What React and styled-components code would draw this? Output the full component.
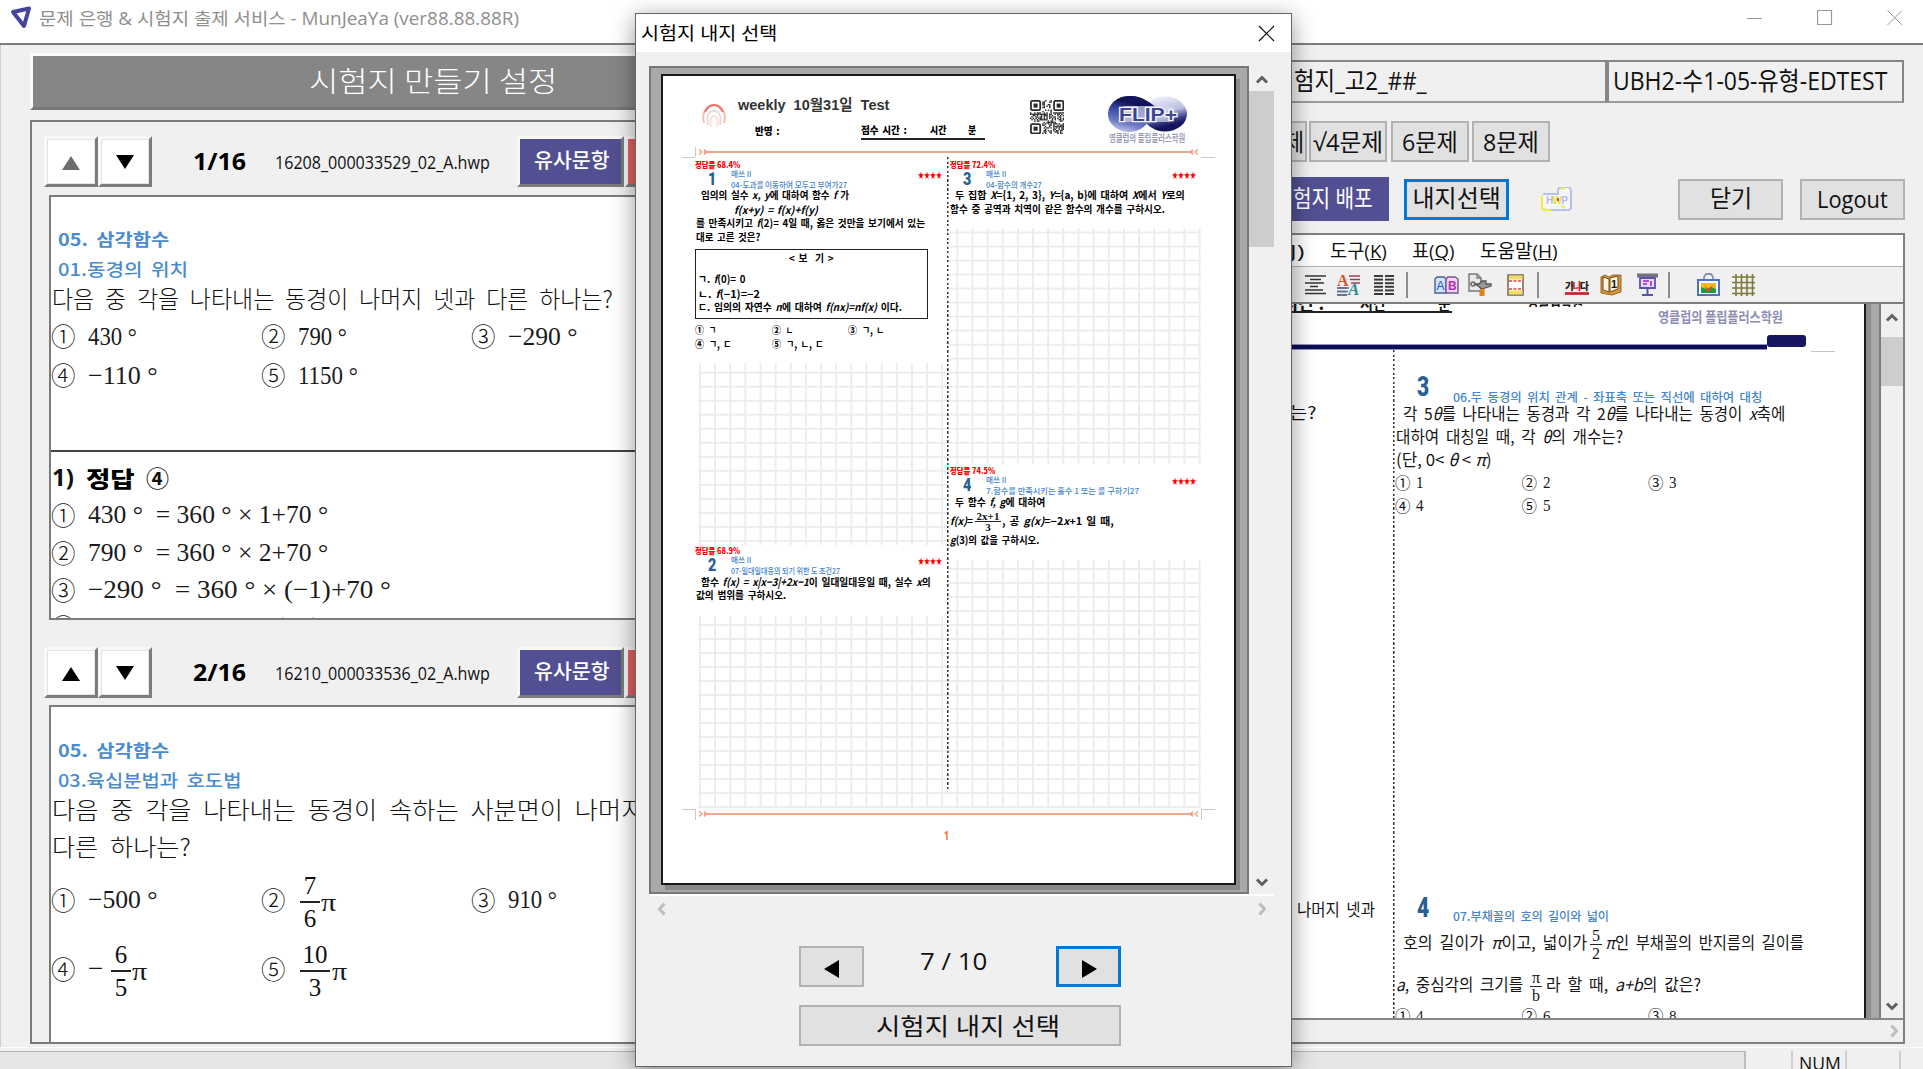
import React, { useLayoutEffect, useRef, useState } from "react";
import styled, { createGlobalStyle, css } from "styled-components";

const UI = `"Open Sans", "Noto Sans CJK KR", sans-serif`;
const KR = `"Noto Sans CJK KR", "Open Sans", sans-serif`;
const MATH = `"Liberation Serif", "Noto Sans CJK KR", serif`;
const NUMERAL = `"Roboto", "Open Sans", sans-serif`;

const Global = createGlobalStyle`
  * { box-sizing: border-box; }
  body { margin: 0; background: #f0f0f0; font-family: ${UI}; color: #111; overflow: hidden; }
`;

/* ---------- fitted text: a run set to an exact measure ---------- */
const Measure = styled.span`
  display: inline-block;
  flex: none;
  width: ${(p) => p.$w}px;
  margin-left: ${(p) => p.$ml || 0}px;
  margin-top: ${(p) => p.$mt || 0}px;
  font-family: ${(p) => p.$font || UI};
  font-size: ${(p) => p.$size || 18}px;
  font-weight: ${(p) => p.$weight || 400};
  color: ${(p) => p.$color || "inherit"};
  word-spacing: ${(p) => p.$ws || 0}em;
  line-height: 1;
  white-space: pre;
`;
const Run = styled.span`
  display: inline-block;
  transform-origin: 0 50%;
`;
function Fit({ w, ml, mt, size, weight, color, font, ws, children }) {
  const ref = useRef(null);
  const [k, setK] = useState(1);
  useLayoutEffect(() => {
    if (ref.current && ref.current.offsetWidth) setK(w / ref.current.offsetWidth);
  }, [w]);
  return (
    <Measure $w={w} $ml={ml} $mt={mt} $size={size} $weight={weight} $color={color} $font={font} $ws={ws}>
      <Run ref={ref} style={{ transform: `scaleX(${k})` }}>{children}</Run>
    </Measure>
  );
}

/* ---------- shared pieces ---------- */
const Row = styled.div`
  display: flex;
  align-items: ${(p) => p.$align || "center"};
  flex: none;
  height: ${(p) => p.$h}px;
  margin-top: ${(p) => p.$mt || 0}px;
  padding-left: ${(p) => p.$x || 0}px;
  width: ${(p) => (p.$w ? p.$w + "px" : "auto")};
`;
const Space = styled.div`
  flex: none;
  height: ${(p) => p.$h}px;
`;
const FracBox = styled.span`
  display: inline-flex;
  flex-direction: column;
  align-items: center;
  flex: none;
  width: ${(p) => p.$w}px;
  margin-left: ${(p) => p.$ml || 0}px;
  margin-top: ${(p) => p.$mt || 0}px;
  font: ${(p) => p.$weight || 400} ${(p) => p.$size}px/${(p) => p.$lh} ${MATH};
  white-space: nowrap;
`;
const Num = styled.span`
  width: 100%;
  text-align: center;
  border-bottom: ${(p) => p.$bar || 2}px solid #222;
`;
const Frac = ({ n, d, w, ml, mt, size = 25, lh = "31px", bar, weight }) => (
  <FracBox $w={w} $ml={ml} $mt={mt} $size={size} $lh={lh} $weight={weight}>
    <Num $bar={bar}>{n}</Num>
    <span>{d}</span>
  </FracBox>
);
const Button = styled.button`
  display: flex;
  align-items: center;
  justify-content: center;
  flex: none;
  width: ${(p) => p.$w}px;
  height: ${(p) => p.$h || 41}px;
  margin-left: ${(p) => p.$ml || 0}px;
  padding: 0;
  overflow: hidden;
  border: 2px solid #b2b2b2;
  background: #e1e1e1;
  color: #111;
  ${(p) => p.$focus && css`border: 3px solid #0078d7;`}
  ${(p) => p.$brand && css`border: 0; background: #525092; color: #fff; justify-content: flex-end; padding-right: 16px;`}
`;
const Chevron = ({ d, color = "#606060" }) => (
  <svg width="14" height="14" viewBox="0 0 14 14">
    <path d={{ up: "M2 9.5 7 4.5 12 9.5", down: "M2 4.5 7 9.5 12 4.5", left: "M9.5 1.5 4.5 7 9.5 12.5", right: "M4.5 1.5 9.5 7 4.5 12.5" }[d]}
      fill="none" stroke={color} strokeWidth="3" />
  </svg>
);
const Glyph = styled.svg`
  margin-top: ${(p) => p.$mt || 0}px;
`;
const Triangle = ({ d, color = "#000", s = 18, mt }) => (
  <Glyph width={s} height={s} viewBox="0 0 18 18" $mt={mt}>
    <path fill={color} d={{ up: "M9 2 18 16H0z", down: "M9 16 18 2H0z", left: "M1 9 16 0V18z", right: "M17 9 2 0V18z" }[d]} />
  </Glyph>
);

/* ---------- main window ---------- */
const Window = styled.div`
  position: relative;
  display: flex;
  flex-direction: column;
  width: 1923px;
  height: 1069px;
  overflow: hidden;
  background: #f0f0f0;
`;
const TitleBar = styled.header`
  display: flex;
  align-items: center;
  flex: none;
  height: 45px;
  padding: 0 20px 7px 10px;
  background: #fff;
  border-bottom: 2px solid #7d7d7d;
`;
const Caption = styled.div`
  display: flex;
  gap: 54px;
  margin-left: auto;
`;
const Body = styled.main`
  display: flex;
  flex: 1;
  min-height: 0;
  border-left: 1px solid #cfcfcf;
`;
const LeftPane = styled.section`
  display: flex;
  flex-direction: column;
  flex: none;
  width: 1279px;
  padding: 8px 0 3px 29px;
`;
const Heading = styled.h1`
  display: flex;
  align-items: center;
  flex: none;
  height: 57px;
  margin: 0;
  padding-left: 276px;
  background: #868686;
  color: #fff;
  border: 3px solid;
  border-color: #fbfbfb #777 #777 #fbfbfb;
`;
const ListPanel = styled.div`
  display: flex;
  flex-direction: column;
  flex: 1;
  min-height: 0;
  margin-top: 10px;
  border: 2px solid #7b7b7b;
`;
const ItemBar = styled.div`
  display: flex;
  align-items: center;
  flex: none;
  height: 51px;
  margin-top: ${(p) => p.$mt}px;
  padding-left: 12px;
`;
const Raised = styled.button`
  display: flex;
  align-items: center;
  justify-content: center;
  flex: none;
  width: ${(p) => p.$w || 54}px;
  height: 51px;
  margin-left: ${(p) => p.$ml || 0}px;
  padding: 0;
  background: ${(p) => p.$bg || "#fff"};
  border: 3px solid;
  border-color: #f8f8f8 #7c7c7c #7c7c7c #f8f8f8;
  outline: ${(p) => (p.$bg ? "0" : "1px solid #e4e4e4")};
  outline-offset: -4px;
`;
const DocView = styled.div`
  display: flex;
  flex-direction: column;
  flex: ${(p) => (p.$h ? "none" : 1)};
  height: ${(p) => (p.$h ? p.$h + "px" : "auto")};
  min-height: 0;
  margin: ${(p) => p.$mt}px 0 0 17px;
  overflow: hidden;
  background: #fff;
  border: 2px solid #7b7b7b;
  border-bottom-width: ${(p) => (p.$h ? 2 : 0)}px;
`;
const Choice = styled.div`
  display: flex;
  align-items: center;
  flex: none;
  width: 210px;
  height: 100%;
`;
const Circle = styled.span`
  flex: none;
  width: ${(p) => p.$w || 37}px;
  font: ${(p) => p.$weight || 300} ${(p) => p.$size || 24.5}px/1 ${KR};
`;
const Rule = styled.div`
  flex: none;
  height: 2px;
  background: #444;
`;

const Q = (p) => <Fit size={23.5} weight={300} font={KR} color="#111" ws={0.25} {...p} />;
const M = (p) => <Fit size={26} font={MATH} color="#1a1a1a" {...p} />;
const Tag = (p) => <Fit size={17.5} font={KR} color="#4a8bd0" ws={0.2} {...p} />;

const Item = ({ index, file, first, mt }) => (
  <ItemBar $mt={mt}>
    <Raised><Triangle d="up" color={first ? "#6d6d6d" : "#000"} mt={3} /></Raised>
    <Raised><Triangle d="down" mt={1} /></Raised>
    <Fit w={53} ml={41} size={24} weight={700} color="#000" mt={-2}>{index}</Fit>
    <Fit w={215} ml={29} size={17.5} mt={2}>{file}</Fit>
    <Raised $w={107} $ml={27} $bg="#525092">
      <Fit w={76} size={20} weight={500} color="#fff" mt={-2}>유사문항</Fit>
    </Raised>
    <Raised $w={107} $ml={1} $bg="#e06161" />
  </ItemBar>
);

const FirstProblem = () => (
  <DocView $h={425} $mt={8}>
    <Row $h={30} $mt={27} $x={7}><Tag w={111} weight={700}>05. 삼각함수</Tag></Row>
    <Row $h={30} $x={7}><Tag w={130} weight={500}>01.동경의 위치</Tag></Row>
    <Row $h={29} $x={1}><Q w={561}>다음 중 각을 나타내는 동경이 나머지 넷과 다른 하나는?</Q></Row>
    <Row $h={47}>
      <Choice><Circle>①</Circle><M w={49}>430 °</M></Choice>
      <Choice><Circle>②</Circle><M w={49}>790 °</M></Choice>
      <Choice><Circle>③</Circle><M w={70}>−290 °</M></Choice>
    </Row>
    <Row $h={31}>
      <Choice><Circle>④</Circle><M w={70}>−110 °</M></Choice>
      <Choice><Circle>⑤</Circle><M w={60}>1150 °</M></Choice>
    </Row>
    <Space $h={59} />
    <Rule />
    <Row $h={38} $mt={6} $x={1}>
      <Fit w={22} size={23} weight={700}>1)</Fit>
      <Fit w={48} ml={12} size={22} weight={900} font={KR} color="#000">정답</Fit>
      <Fit w={23} ml={12} size={23} weight={700} font={KR}>④</Fit>
    </Row>
    <Row $h={38.5}><Circle>①</Circle><M w={240}>430 °  = 360 ° × 1+70 °</M></Row>
    <Row $h={37}><Circle>②</Circle><M w={240}>790 °  = 360 ° × 2+70 °</M></Row>
    <Row $h={37.5}><Circle>③</Circle><M w={303}>−290 °  = 360 ° × (−1)+70 °</M></Row>
    <Row $h={36}><Circle>④</Circle><M w={303}>−110 °  = 360 ° × (−1)+250 °</M></Row>
  </DocView>
);

const SecondProblem = () => (
  <DocView $mt={7}>
    <Row $h={30} $mt={28} $x={7}><Tag w={111} weight={700}>05. 삼각함수</Tag></Row>
    <Row $h={30} $x={7}><Tag w={183} weight={500}>03.육십분법과 호도법</Tag></Row>
    <Row $h={29} $x={1}><Q w={650}>다음 중 각을 나타내는 동경이 속하는 사분면이 나머지 넷과</Q></Row>
    <Row $h={45} $x={1}><Q w={139}>다른 하나는?</Q></Row>
    <Row $h={62}>
      <Choice><Circle>①</Circle><M w={70}>−500 °</M></Choice>
      <Choice><Circle>②</Circle><Frac n="7" d="6" w={20} ml={2} mt={3} /><M w={15} ml={1} mt={6}>π</M></Choice>
      <Choice><Circle>③</Circle><M w={49}>910 °</M></Choice>
    </Row>
    <Row $h={76}>
      <Choice><Circle>④</Circle><M w={16}>−</M><Frac n="6" d="5" w={20} ml={7} mt={3} /><M w={15} ml={1} mt={6}>π</M></Choice>
      <Choice><Circle>⑤</Circle><Frac n="10" d="3" w={30} ml={2} mt={3} /><M w={15} ml={2} mt={6}>π</M></Choice>
    </Row>
  </DocView>
);

/* ---------- right pane ---------- */
const RightPane = styled.section`
  display: flex;
  flex-direction: column;
  flex: none;
  width: 625px;
  padding: 15px 0 3px;
`;
const Field = styled.div`
  display: flex;
  align-items: center;
  flex: none;
  width: ${(p) => p.$w}px;
  height: 43px;
  padding: 0 0 3px ${(p) => p.$pl}px;
  border: 2px solid #868686;
  border-bottom-color: #9b9b9b;
`;
const Editor = styled.div`
  display: flex;
  flex-direction: column;
  flex: 1;
  min-height: 0;
  margin-top: 12px;
  border: 2px solid #7f7f7f;
  border-left: 0;
`;
const Menu = styled.nav`
  display: flex;
  align-items: center;
  flex: none;
  height: 31px;
  padding-top: 2px;
  background: #fff;
`;
const Tools = styled.div`
  display: flex;
  align-items: center;
  flex: none;
  height: 38px;
  border-top: 1px solid #b0b0b0;
  border-bottom: 2px solid #7c7c7c;
`;
const IconSlot = styled.span`
  display: flex;
  flex: none;
  margin-left: ${(p) => p.$ml}px;
`;
const Icon = ({ ml, w = 22, children }) => (
  <IconSlot $ml={ml}><svg width={w} height="24" viewBox={`0 0 ${w} 24`} fill="none">{children}</svg></IconSlot>
);
const Sep = styled.span`
  flex: none;
  width: 2px;
  height: 26px;
  margin-left: ${(p) => p.$ml}px;
  background: #8c8c8c;
`;
const Canvas = styled.div`
  display: flex;
  flex: 1;
  min-height: 0;
  background: #a9a9a9;
  border-bottom: 2px solid #888;
`;
const Sheet = styled.div`
  display: flex;
  flex-direction: column;
  flex: none;
  width: 586px;
  overflow: hidden;
  background: #fff;
  border-right: 2px solid #1c1c1c;
`;
const Gutter = styled.div`
  flex: none;
  width: 15px;
  border-right: 2px solid #7c7c7c;
  background: linear-gradient(90deg, #8e8e8e 5px, #a9a9a9 5px);
`;
const VScroll = styled.div`
  display: flex;
  flex-direction: column;
  align-items: center;
  flex: 1;
  padding: 7px 0 5px;
  background: #f0f0f0;
`;
const Thumb = styled.div`
  width: 100%;
  height: ${(p) => p.$h}px;
  margin: ${(p) => p.$mt}px 0 auto;
  background: #cdcdcd;
`;
const HScroll = styled.div`
  display: flex;
  align-items: center;
  justify-content: flex-end;
  flex: none;
  height: 22px;
  padding-right: 2px;
`;
const Clip = styled.div`
  display: flex;
  flex: none;
  width: ${(p) => p.$w}px;
  height: ${(p) => p.$h}px;
  margin-left: ${(p) => p.$ml || 0}px;
  overflow: hidden;
  border-bottom: ${(p) => (p.$line ? 2 : 0)}px solid #222;
`;
const Bar = styled.div`
  flex: none;
  width: 487px;
  height: 6px;
  background: #0d0d58;
  border: 1px solid #9494bd;
  border-width: 1px 0;
`;
const Tab = styled.div`
  flex: none;
  align-self: flex-start;
  width: 39px;
  height: 12px;
  border-radius: 3px;
  background: #17175f;
`;
const Crop = styled.i`
  flex: none;
  width: 24px;
  height: 1px;
  margin: 0 0 -2px 5px;
  background: #c4c4c4;
`;
const Columns = styled.div`
  display: flex;
  flex: 1;
  min-height: 0;
`;
const Col = styled.div`
  display: flex;
  flex-direction: column;
  flex: none;
  width: ${(p) => p.$w}px;
  ${(p) => p.$dots && css`
    background: repeating-linear-gradient(180deg, #333 0 2px, transparent 2px 4.5px) 0 0 / 1.5px ${p.$dots} no-repeat;
  `}
`;
const D = (p) => <Fit size={16.5} font={KR} color="#161616" ws={0.2} {...p} />;
const SmallOptions = ({ values, h = 23 }) => (
  <Row $h={h} $x={2}>
    {values.map(([c, v]) => (
      <Row key={c} $h={h} $w={126.5}>
        <Circle $w={21} $size={15.5} $weight={400}>{c}</Circle>
        <M w={8} size={17}>{v}</M>
      </Row>
    ))}
  </Row>
);
const BigNum = (p) => <Fit w={12} size={28} weight={900} font={NUMERAL} color="#2a5f96" {...p} />;

const MenuText = ({ ml, w, label, mnemonic }) => (
  <Fit w={w} ml={ml} size={19}>{label}(<u>{mnemonic}</u>)</Fit>
);

const lines = (xs, y0, n, step, color) =>
  xs.map(([a, b]) => Array.from({ length: n }, (_, i) => (
    <path key={a + "-" + i} d={`M${a} ${y0 + i * step}H${b}`} stroke={color} strokeWidth="2" />
  )));

const EditorTools = () => (
  <Tools>
    <Icon ml={25}>
      <path d="M0 3H21M5 6.5H16M0 10H19M5 13.500H13M0 17H18M0 20.500H21" stroke="#333" strokeWidth="1.7" />
    </Icon>
    <Icon ml={10} w={25}>
      <path d="M12 3H23M13 6.500H23M14 10H23M0 15H10M0 18.500H9M0 22H10" stroke="#9a3f55" strokeWidth="1.7" />
      <path d="M0 15H12M0 18.500H11M0 22H10" stroke="#4d7897" strokeWidth="1.7" />
      <text x="0" y="13" fontFamily="Liberation Serif" fontWeight="700" fontSize="16" fill="#d2562a">A</text>
      <text x="11" y="22" fontFamily="Liberation Serif" fontWeight="700" fontStyle="italic" fontSize="17" fill="#2b8e96">A</text>
    </Icon>
    <Icon ml={12}>{lines([[0, 9], [11, 20]], 3, 6, 3.6, "#3a3a3a")}</Icon>
    <Sep $ml={10} />
    <Icon ml={26} w={26}>
      <path d="M1 6 3 4H10L12 6V20H1z" fill="#cfe3fb" stroke="#4d5f8f" strokeWidth="1.400" />
      <path d="M12 6 14 4H21L24 6V20H12z" fill="#f3d3f1" stroke="#6d5a85" strokeWidth="1.400" />
      <text x="2.500" y="17" fontFamily="Liberation Sans" fontSize="12" fill="#2056d8">A</text>
      <text x="14" y="17" fontFamily="Liberation Sans" fontWeight="700" fontSize="12" fill="#b332ab">B</text>
    </Icon>
    <Icon ml={8} w={25}>
      <path d="M1 1H9L13 5V18H1z" fill="#e9e9e9" stroke="#7a7a7a" strokeWidth="1.500" />
      <path d="M9 1V5H13" stroke="#7a7a7a" strokeWidth="1.300" />
      <circle cx="5" cy="11" r="2" stroke="#666" strokeWidth="1.500" />
      <path d="M7 11H11L14 8H18V11H23V13L17 15 14 16 10 13z" stroke="#555" fill="#9a9a9a" strokeWidth="1.300" />
      <path d="M14 16V23" stroke="#e38312" strokeWidth="5" />
    </Icon>
    <Icon ml={14} w={18}>
      <path d="M1 2H16V22H1z" fill="#fff" stroke="#6d6852" strokeWidth="1.500" />
      <path d="M2 4.500H15.500M2 19.500H15.500" stroke="#f4dc62" strokeWidth="4" />
      <path d="M2 8H16M2 16H16" stroke="#e2433b" strokeWidth="1.500" strokeDasharray="3 1.500" />
    </Icon>
    <Sep $ml={12} />
    <Icon ml={26} w={26}>
      <text x="0" y="17" fontFamily="Noto Sans CJK KR" fontWeight="900" fontSize="10" textLength="24" fill="#222">가<tspan fill="#d3262b">나</tspan>다</text>
      <path d="M0 20.500H24" stroke="#c02028" strokeWidth="2.600" />
    </Icon>
    <Icon ml={9} w={24}>
      <path d="M1 4 5 2 9 4 13 2H21V19L12 22 1 20z" fill="#d9963a" stroke="#9a6528" />
      <path d="M3 4 9 6V19L3 17zM10 5 18 3V16L10 19z" fill="#fff6df" stroke="#6b4a22" />
      <text x="11" y="15" fontFamily="Liberation Sans" fontWeight="700" fontSize="11" fill="#111">1</text>
    </Icon>
    <Icon ml={13} w={22}>
      <path d="M0 2.500H21" stroke="#75737d" strokeWidth="4" />
      <path d="M3 5H18V15H3z" fill="#e9dcfb" stroke="#5c50b8" strokeWidth="1.800" />
      <path d="M6 8H12M6 11H10M14 8V13" stroke="#b04fd0" strokeWidth="2" />
      <path d="M10.500 15V22M5 22H16" stroke="#5656a0" strokeWidth="2" />
    </Icon>
    <Sep $ml={9} />
    <Icon ml={27} w={26}>
      <path d="M7 8V4L9 1H14L16 4V8" stroke="#8592b2" strokeWidth="1.800" />
      <path d="M1 7H22V22H1z" fill="#fff" stroke="#4c74ba" strokeWidth="2" />
      <path d="M4 10H19V20H4z" fill="#f5b52f" />
      <path d="M4 14 9 16 14 14 19 16V20H4z" fill="#1f9a3d" />
      <path d="M7 12 11 16 16 12 13 18H10z" fill="#e0502a" />
    </Icon>
    <Icon ml={9} w={24}>
      <path d="M4 1V23M9.500 1V23M15 1V23M20.500 1V23M0 4H23M0 9.500H23M0 15H23M0 20.500H23" stroke="#7d7a3c" strokeWidth="1.600" />
    </Icon>
  </Tools>
);

const EditorSheet = () => (
  <Sheet>
    <Row $h={31} $align="flex-start">
      <Clip $w={172} $h={9} $line>
        <Fit w={46} ml={2} mt={-11} size={18} weight={700} font={KR}>시간 : </Fit>
        <Fit w={26} ml={32} mt={-11} size={18} weight={700} font={KR}>시간</Fit>
        <Fit w={13} ml={52} mt={-11} size={18} weight={700} font={KR}>분</Fit>
      </Clip>
      <Clip $w={56} $h={3} $ml={75}><Fit w={56} mt={-10} size={14} weight={700} font={KR}>영클럽학원</Fit></Clip>
      <Fit w={125} ml={75} mt={5} size={14} weight={700} font={KR} color="#8d8db4">영클럽의 플립플러스학원</Fit>
    </Row>
    <Row $h={15} $align="flex-end">
      <Bar /><Tab /><Crop />
    </Row>
    <Columns>
      <Col $w={113}>
        <Space $h={51} />
        <Row $h={23}><D w={62} ml={-26}>하나는?</D></Row>
        <Space $h={474} />
        <Row $h={23} $x={17}><D w={78}>나머지 넷과</D></Row>
      </Col>
      <Col $w={471} $dots="669px">
        <Space $h={22} />
        <Row $h={30} $x={24}>
          <BigNum mt={-1}>3</BigNum>
          <Fit w={309} ml={24} mt={20} size={12} weight={500} ws={0.2} font={KR} color="#4585cb">06.두 동경의 위치 관계 - 좌표축 또는 직선에 대하여 대칭</Fit>
        </Row>
        <Row $h={23} $x={10}><D w={382}>각 5<i>θ</i>를 나타내는 동경과 각 2<i>θ</i>를 나타내는 동경이 <i>x</i>축에</D></Row>
        <Row $h={23} $x={3}><D w={227}>대하여 대칭일 때, 각 <i>θ</i>의 개수는?</D></Row>
        <Row $h={23} $x={3}><D w={96} ws={0}>(단, 0&lt; <i>θ</i> &lt; <i>π</i>)</D></Row>
        <SmallOptions values={[["①", "1"], ["②", "2"], ["③", "3"]]} />
        <SmallOptions values={[["④", "4"], ["⑤", "5"]]} />
        <Space $h={375} />
        <Row $h={30} $x={24}>
          <BigNum mt={2}>4</BigNum>
          <Fit w={156} ml={24} mt={18} size={12} weight={500} ws={0.2} font={KR} color="#4585cb">07.부채꼴의 호의 길이와 넓이</Fit>
        </Row>
        <Row $h={40} $x={10}>
          <D w={184}>호의 길이가 <i>π</i>이고, 넓이가</D>
          <Frac n="5" d="2" w={12} ml={3} mt={4} size={16} lh="17px" bar={1} />
          <D w={199} ml={3}><i>π</i>인 부채꼴의 반지름의 길이를</D>
        </Row>
        <Row $h={44} $x={3}>
          <D w={127}><i>a</i>, 중심각의 크기를</D>
          <Frac n="π" d="b" w={12} ml={7} mt={4} size={16} lh="17px" bar={1} />
          <D w={155} ml={4}>라 할 때, <i>a+b</i>의 값은?</D>
        </Row>
        <SmallOptions h={20} values={[["①", "4"], ["②", "6"], ["③", "8"]]} />
      </Col>
    </Columns>
  </Sheet>
);

/* ---------- status bar ---------- */
const Status = styled.footer`
  display: flex;
  flex: none;
  height: 22px;
  border-top: 1px solid #fff;
`;
const Cell = styled.div`
  width: ${(p) => p.$w}px;
  height: 19px;
  margin-top: 3px;
  padding: 2px 0 0 6px;
  flex: none;
  overflow: hidden;
  border-right: 2px solid #cfcfcf;
  ${(p) => p.$sunk && css`background: #e5e5e5; border-top: 1px solid #b5b5b5; border-right-color: #bdbdbd;`}
`;

/* ---------- dialog ---------- */
const Dialog = styled.div`
  position: absolute;
  left: 635px;
  top: 13px;
  display: flex;
  flex-direction: column;
  width: 657px;
  height: 1054px;
  background: #f0f0f0;
  border: 1px solid #666;
  box-shadow: 0 5px 22px rgba(0, 0, 0, 0.42);
`;
const DialogTitle = styled.div`
  display: flex;
  align-items: center;
  justify-content: space-between;
  flex: none;
  height: 38px;
  padding: 0 16px 0 5px;
  background: #fff;
`;
const PreviewRow = styled.div`
  display: flex;
  flex: none;
  height: 828px;
  margin: 14px 0 0 13px;
`;
const Preview = styled.div`
  flex: none;
  width: 600px;
  padding: 6px 0 0 10px;
  background: #a9a9a9;
  border: 2px solid #787878;
`;
const Paper = styled.div`
  display: flex;
  flex-direction: column;
  width: 575px;
  height: 811px;
  background: #fff;
  border: 2px solid #181818;
  box-shadow: 4px 5px 0 #8a8a8a;
`;
const PaperHead = styled.div`
  display: flex;
  flex: none;
  height: 71px;
  padding-left: 39px;
`;
const HeadText = styled.div`
  width: 250px;
  margin-left: 12px;
  padding-top: 19px;
`;
const Under = styled.span`
  display: flex;
  flex: none;
  width: 124px;
  height: 17px;
  margin-left: 81px;
  border-bottom: 2px solid #222;
`;
const EdgeRow = styled.div`
  display: flex;
  align-items: center;
  flex: none;
  height: 10px;
  margin: ${(p) => p.$mt || 0}px 17px 0 19px;
`;
const Mark = styled.i`
  flex: none;
  width: 14px;
  height: 11px;
  border: 0 solid #c9c9c9;
  border-width: ${(p) => p.$b};
`;
const OrangeRule = () => (
  <svg width="505" height="8" viewBox="0 0 505 8">
    <path d="M8 4H497" stroke="#f3a58d" strokeWidth="2" />
    <path d="M3 1.500 6 4 3 6.500M8 1.500 11 4 8 6.500M502 1.500 499 4 502 6.500M497 1.500 494 4 497 6.500" stroke="#f19b80" fill="none" strokeWidth="1.300" />
  </svg>
);
const GridBody = styled.div`
  display: flex;
  flex: none;
  width: 506px;
  height: 651px;
  margin-left: 32px;
  background:
    linear-gradient(90deg, #fff 3px, transparent 3px),
    linear-gradient(90deg, #ececec 1.5px, transparent 1.5px) 4px 0 / 15.15px 100%,
    linear-gradient(180deg, #ececec 1.5px, transparent 1.5px) 0 4.500px / 100% 14.02px;
`;
const Problem = styled.div`
  flex: none;
  height: ${(p) => p.$h}px;
  margin-bottom: ${(p) => p.$gap || 0}px;
  margin-left: ${(p) => p.$ml || 0}px;
  background: #fff;
`;
const BoxView = styled.div`
  width: 233px;
  height: 70px;
  margin-top: 1px;
  border: 1.5px solid #222;
`;
const Footer = styled.div`
  display: flex;
  justify-content: center;
  padding-top: 11px;
  width: 567px;
`;
const P = (p) => <Fit size={10.5} weight={700} font={KR} color="#000" ws={0.15} {...p} />;

const Head = ({ n, rate, sub, subW, x = 0, shift = 0 }) => (
  <>
    <Row $h={10} $x={x}><Fit w={45} size={8.5} weight={900} font={KR} color="#f00">정답률 {rate}</Fit></Row>
    <Row $h={10} $x={x + 13}>
      <Fit w={8} mt={10} size={18} weight={900} font={NUMERAL} color="#2a5f96">{n}</Fit>
      <Fit w={20} ml={15} mt={-1} size={8} weight={500} font={KR} color="#4585cb">매쓰 II</Fit>
      <Fit w={24} ml={167 - shift} mt={0} size={8.5} weight={700} font={KR} color="#f00">★★★★</Fit>
    </Row>
    <Row $h={13} $x={x + 36}><Fit w={subW} size={8} mt={-2} weight={500} font={KR} color="#4585cb">{sub}</Fit></Row>
  </>
);
const PreviewOption = ({ c, t, w }) => (
  <Row $h={14} $w={76.5}>
    <Fit w={9} size={10} weight={900} font={KR}>{c}</Fit>
    <P w={w} ml={5} size={10}>{t}</P>
  </Row>
);

const QR = () => {
  const cells = [];
  let s = 7;
  for (let y = 0; y < 25; y++)
    for (let x = 0; x < 25; x++) {
      s = (s * 1103515245 + 12345) % 2147483648;
      const finder = (x < 9 && y < 9) || (x > 15 && y < 9) || (x < 9 && y > 15);
      if (!finder && (s >> 12) % 2) cells.push(<rect key={x + "," + y} x={x} y={y} width="1.050" height="1.050" />);
    }
  return (
    <svg width="34" height="34" viewBox="0 0 25 25" fill="#2b2b2b">
      {cells}
      {[[0, 0], [17, 0], [0, 17]].map(([x, y]) => (
        <g key={x + "-" + y} transform={`translate(${x} ${y})`}>
          <rect x=".7" y=".7" width="6.800" height="6.800" rx="1" fill="none" stroke="#2b2b2b" strokeWidth="1.300" />
          <rect x="2.600" y="2.600" width="3" height="3" />
        </g>
      ))}
    </svg>
  );
};
const FlipLogo = () => (
  <svg width="84" height="40" viewBox="0 0 84 40">
    <defs>
      <linearGradient id="swirlLeft" x1=".3" y1="1" x2=".6" y2="0"><stop offset="0" stopColor="#c9cdea" /><stop offset=".25" stopColor="#6f7cc4" /><stop offset=".55" stopColor="#3b4aa5" /><stop offset=".8" stopColor="#14145a" /></linearGradient>
      <linearGradient id="swirlRight" x1=".3" y1="0" x2=".6" y2="1"><stop offset="0" stopColor="#f0f2fb" /><stop offset=".45" stopColor="#b9bfe2" /><stop offset=".7" stopColor="#3c3f8c" /><stop offset=".85" stopColor="#14145a" /></linearGradient>
    </defs>
    <ellipse cx="60" cy="20" rx="22" ry="17.500" fill="url(#swirlRight)" />
    <ellipse cx="24" cy="20" rx="21" ry="18" fill="url(#swirlLeft)" />
    <path d="M20 3C34 -1 44 8 52 14L40 18C36 10 28 4 20 3z" fill="#14145a" />
    <rect x="14" y="12" width="56" height="16" rx="7" fill="#d4d7ea" opacity=".7" />
    <text x="14" y="26.500" fontFamily="Liberation Sans" fontWeight="700" fontSize="19" textLength="58" lengthAdjust="spacingAndGlyphs" fill="#3d4596" stroke="#f5f6fc" strokeWidth="2.600" paintOrder="stroke">FLIP+</text>
  </svg>
);
const LogoBlock = styled.div`
  display: flex;
  flex-direction: column;
  margin: 18px 0 0 41px;
`;
const Push = styled.div`
  padding-top: ${(p) => p.$t}px;
`;
const Bottom = styled.div`
  display: flex;
  align-items: center;
  justify-content: space-between;
  flex: none;
  width: 322px;
  height: 41px;
  margin: 24px 0 18px 163px;
`;
const Groove = styled.div`
  flex: none;
  width: 625px;
  height: 2px;
  margin-left: 13px;
  background: #fff;
`;

const PreviewPaper = () => (
  <Paper>
    <PaperHead>
      <Push $t={27}>
        <svg width="24" height="28" viewBox="0 0 24 28" fill="none">
          <path d="M2 20C-1 9 5 2 12 2S25 9 22 20" stroke="#f6c0a8" strokeWidth="2" />
          <path d="M3 9C6 3 9 2 12 2S18 3 21 9" stroke="#ee7468" strokeWidth="2" />
          <path d="M6 22C4 13 7 8 12 8S20 13 18 22" stroke="#e2dfdf" strokeWidth="2" />
          <path d="M9 24C7 17 9 13 12 13S17 17 15 24" stroke="#fadfda" strokeWidth="2" />
        </svg>
      </Push>
      <HeadText>
        <Row $h={20}><Fit w={151} size={14.5} weight={700} font={`"Liberation Sans", "Noto Sans CJK KR", sans-serif`} color="#333">weekly  10월31일  Test</Fit></Row>
        <Row $h={20} $mt={6} $x={17}>
          <P w={25} size={10} weight={900}>반명 :</P>
          <Under>
            <P w={46} mt={2} size={10} weight={900}>점수 시간 :</P>
            <P w={16} ml={23} mt={2} size={10} weight={900}>시간</P>
            <P w={8} ml={22} mt={2} size={10} weight={900}>분</P>
          </Under>
        </Row>
      </HeadText>
      <Push $t={24}><Row $h={34} $x={42}><QR /></Row></Push>
      <LogoBlock>
        <FlipLogo />
        <Fit w={76} ml={4} mt={-1} size={10} weight={700} font={KR} color="#9c9cb9">영클럽의 플립플러스학원</Fit>
      </LogoBlock>
    </PaperHead>
    <EdgeRow><Mark $b="0 1px 1px 0" /><OrangeRule /><Mark $b="0 0 1px 0" /></EdgeRow>
    <GridBody>
      <Col $w={252}>
        <Problem $h={206} $gap={182}>
          <Space $h={2} />
          <Head n="1" rate="68.4%" sub="04-도과를 이동하여 모두고 부여가27" subW={116} />
          <Row $h={7} $x={6}><P w={148}>임의의 실수 <i>x, y</i>에 대하여 함수 <i>f</i> 가</P></Row>
          <Row $h={22} $x={39}><P w={84}><i>f(x+y) = f(x)+f(y)</i></P></Row>
          <Row $h={5} $x={1}><P w={229}>를 만족시키고 <i>f</i>(2)= 4일 때, 옳은 것만을 보기에서 있는</P></Row>
          <Row $h={22} $x={1}><P w={64}>대로 고른 것은?</P></Row>
          <BoxView>
            <Row $h={17} $x={93}><P w={45}>&lt; 보  기 &gt;</P></Row>
            <Row $h={25} $x={2}><P w={47}>ㄱ. <i>f</i>(0)= 0</P></Row>
            <Row $h={5} $x={2}><P w={62}>ㄴ. <i>f</i>(−1)=−2</P></Row>
            <Row $h={20} $x={2}><P w={204}>ㄷ. 임의의 자연수 <i>n</i>에 대하여 <i>f(nx)=nf(x)</i> 이다.</P></Row>
          </BoxView>
          <Row $h={14} $mt={4}>
            <PreviewOption c="①" t="ㄱ" w={7} /><PreviewOption c="②" t="ㄴ" w={7} /><PreviewOption c="③" t="ㄱ, ㄴ" w={22} />
          </Row>
          <Row $h={13}>
            <PreviewOption c="④" t="ㄱ, ㄷ" w={22} /><PreviewOption c="⑤" t="ㄱ, ㄴ, ㄷ" w={38} />
          </Row>
        </Problem>
        <Problem $h={71}>
          <Head n="2" rate="68.9%" sub="07-일대일대응의 되기 위한 도 조건27" subW={109} />
          <Row $h={8} $x={6}><P w={230}>함수 <i>f(x) = x|x−3|+2x−1</i>이 일대일대응일 때, 실수 <i>x</i>의</P></Row>
          <Row $h={19} $x={1}><P w={90}>값의 범위를 구하시오.</P></Row>
        </Problem>
      </Col>
      <Col $w={254} $dots="633px">
        <Problem $h={71} $gap={236} $ml={2}>
          <Space $h={2} />
          <Head n="3" rate="72.4%" sub="04-함수의 개수27" subW={56} x={1} shift={1} />
          <Row $h={7} $x={6}><P w={230}>두 집합 <i>X</i>={"{1, 2, 3}"}, <i>Y</i>={"{a, b}"}에 대하여 <i>X</i>에서 <i>Y</i>로의</P></Row>
          <Row $h={20} $x={1}><P w={215}>함수 중 공역과 치역이 같은 함수의 개수를 구하시오.</P></Row>
        </Problem>
        <Problem $h={96} $ml={2}>
          <Space $h={1} />
          <Head n="4" rate="74.5%" sub="7.함수를 만족시키는 홀수 1 또는 를 구하기27" subW={153} x={1} shift={1} />
          <Row $h={8} $x={6}><P w={90}>두 함수 <i>f, g</i>에 대하여</P></Row>
          <Row $h={30} $x={1}>
            <P w={23}><i>f(x)</i>=</P>
            <Frac n="2x+1" d="3" w={26} ml={2} size={11} lh="10px" bar={1.5} weight={700} />
            <P w={112} ml={1}>, 공 <i>g(x)</i>=−2<i>x</i>+1 일 때,</P>
          </Row>
          <Row $h={8} $x={1}><P w={89}><i>g</i>(3)의 값을 구하시오.</P></Row>
        </Problem>
      </Col>
    </GridBody>
    <EdgeRow $mt={1}><Mark $b="1px 1px 0 0" /><OrangeRule /><Mark $b="1px 0 0 1px" /></EdgeRow>
    <Footer><Fit w={5} size={12} weight={700} color="#f26a1b">1</Fit></Footer>
  </Paper>
);

export default function App() {
  return (
    <Window>
      <Global />
      <TitleBar>
        <svg width="22" height="24" viewBox="0 0 22 24">
          <path d="M3 6 19 2.500 14 20z" fill="#fff" stroke="#45439a" strokeWidth="4" strokeLinejoin="round" />
        </svg>
        <Fit w={480} ml={7} mt={2} size={17.5} color="#8f8f8f">문제 은행 &amp; 시험지 출제 서비스 - MunJeaYa (ver88.88.88R)</Fit>
        <Caption>
          <svg width="16" height="16"><path d="M0 8.500H15" stroke="#999" /></svg>
          <svg width="16" height="16"><path d="M.5.5H14.500V14.500H.5z" stroke="#999" fill="none" strokeWidth="1.200" /></svg>
          <svg width="16" height="16"><path d="M.5.5 15 15M15 .5.5 15" stroke="#999" /></svg>
        </Caption>
      </TitleBar>
      <Body>
        <LeftPane>
          <Heading><Fit w={248} mt={-2} size={28.5} weight={300} font={KR}>시험지 만들기 설정</Fit></Heading>
          <ListPanel>
            <Item index="1/16" file="16208_000033529_02_A.hwp" first mt={14} />
            <FirstProblem />
            <Item index="2/16" file="16210_000033536_02_A.hwp" mt={27} />
            <SecondProblem />
          </ListPanel>
        </LeftPane>
        <RightPane>
          <Row $h={43}>
            <Field $w={327} $pl={12}><Fit w={132} size={25}>험지_고2_##_</Fit></Field>
            <Field $w={297} $pl={4}><Fit w={274} size={25}>UBH2-수1-05-유형-EDTEST</Fit></Field>
          </Row>
          <Row $h={41} $mt={18}>
            <Button $w={27}><Fit w={20} size={24}>제</Fit></Button>
            <Button $w={78} $ml={2}><Fit w={70} size={24}>√4문제</Fit></Button>
            <Button $w={78} $ml={4}><Fit w={56} size={24}>6문제</Fit></Button>
            <Button $w={78} $ml={3}><Fit w={56} size={24}>8문제</Fit></Button>
          </Row>
          <Row $h={44} $mt={15}>
            <Button $w={109} $h={44} $brand><Fit w={80} size={24} mt={-2} color="#fff">험지 배포</Fit></Button>
            <Button $w={105} $ml={15} $focus><Fit w={88} size={24} mt={-2}>내지선택</Fit></Button>
            <Icon ml={32} w={32}>
              <path d="M2 7H17V4Q17 0 22 0H26Q30 0 30 4V20Q30 23 27 23H4Q1 23 1 20V9" fill="#f6f6fd" stroke="#b9c0ea" strokeWidth="2" />
              <path d="M1 8V21Q2 23 6 23H10M20 1.500H24M20 19 24 21" stroke="#f0f03a" strokeWidth="2" />
              <text x="5" y="17" fontFamily="Liberation Sans" fontWeight="700" fontSize="10" textLength="22" fill="#b3b9f0">H<tspan fill="#e6e619">W</tspan>P</text>
              <path d="M17 11V14" stroke="#e0409a" strokeWidth="2" />
            </Icon>
            <Button $w={105} $ml={105}><Fit w={42} size={24} mt={-2}>닫기</Fit></Button>
            <Button $w={105} $ml={17}><Fit w={71} size={24}>Logout</Fit></Button>
          </Row>
          <Editor>
            <Menu>
              <MenuText w={22} ml={2} label="" mnemonic="J" />
              <MenuText w={57} ml={26} label="도구" mnemonic="K" />
              <MenuText w={42} ml={25} label="표" mnemonic="Q" />
              <MenuText w={78} ml={26} label="도움말" mnemonic="H" />
            </Menu>
            <EditorTools />
            <Canvas>
              <EditorSheet />
              <Gutter />
              <VScroll><Chevron d="up" /><Thumb $h={49} $mt={12} /><Chevron d="down" /></VScroll>
            </Canvas>
            <HScroll><Chevron d="right" color="#bdbdbd" /></HScroll>
          </Editor>
        </RightPane>
      </Body>
      <Status>
        <Cell $w={1746} $sunk />
        <Cell $w={47} />
        <Cell $w={54}><Fit w={42} size={18}>NUM</Fit></Cell>
        <Cell $w={54} />
      </Status>

      <Dialog>
        <DialogTitle>
          <Fit w={136} size={18} color="#000">시험지 내지 선택</Fit>
          <svg width="17" height="17"><path d="M1 1 16 16M16 1 1 16" stroke="#111" strokeWidth="1.200" /></svg>
        </DialogTitle>
        <PreviewRow>
          <Preview><PreviewPaper /></Preview>
          <Row $h={828} $w={25} $align="stretch">
            <VScroll><Chevron d="up" /><Thumb $h={156} $mt={4} /><Chevron d="down" /></VScroll>
          </Row>
        </PreviewRow>
        <Groove />
        <Row $h={26} $x={19}>
          <Chevron d="left" color="#bdbdbd" />
          <Row $h={26} $x={586}><Chevron d="right" color="#bdbdbd" /></Row>
        </Row>
        <Bottom>
          <Button $w={65}><Triangle d="left" mt={4} /></Button>
          <Fit w={67} ml={-14} mt={-9} size={23.5}>7 / 10</Fit>
          <Button $w={65} $focus><Triangle d="right" mt={4} /></Button>
        </Bottom>
        <Row $h={41} $x={163}>
          <Button $w={322}><Fit w={184} size={24}>시험지 내지 선택</Fit></Button>
        </Row>
      </Dialog>
    </Window>
  );
}
